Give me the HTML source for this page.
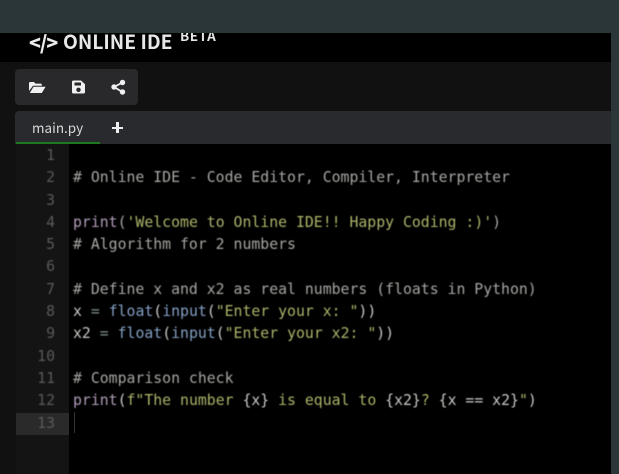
<!DOCTYPE html>
<html><head><meta charset="utf-8"><style>
html,body{margin:0;padding:0;background:#2b3639;width:619px;height:474px;overflow:hidden}
div{position:absolute}
#code,#nums{font-family:"DejaVu Sans Mono","Liberation Mono",monospace;font-size:14.82px;line-height:22.3px;white-space:pre;filter:blur(.45px)}
#code{left:73px;top:145px;color:#a6a6a2}
#nums{left:16px;top:145px;width:39px;text-align:right;color:#5a5a5a}
.k{color:#b09cb8}.f{color:#84a0c4}.s{color:#adb36a}.w{color:#c8c8c4}.o{color:#7f9090}
</style></head><body>
<div style="left:0;top:33px;width:611px;height:441px;background:#000;overflow:hidden">
  <div style="left:29px;top:-8.500px;color:#ececec;font:900 19.5px/34px 'Noto Sans CJK JP','DejaVu Sans',sans-serif;white-space:nowrap;filter:blur(.3px)"><span style="letter-spacing:-1px">&lt;/&gt;</span></div>
  <div style="left:63px;top:-9.500px;color:#e8e8e8;font:700 19.300px/34px 'Noto Sans CJK JP','DejaVu Sans',sans-serif;white-space:nowrap;filter:blur(.3px)">ONLINE IDE</div>
  <div style="left:180px;top:-7px;color:#e4e4e4;font:700 13.500px/18px 'Noto Sans CJK JP','Liberation Sans',sans-serif;letter-spacing:.6px;white-space:nowrap">BETA</div>
</div>
<div style="left:0;top:62px;width:611px;height:412px;background:#111"></div>
<div style="left:15px;top:69px;width:123px;height:36px;background:#29292c;border-radius:4px"></div>
<svg style="position:absolute;left:28px;top:79px" width="100" height="16" viewBox="0 0 100 16">
  <path fill="#f0f0f0" d="M1 4.200Q1 3 2.200 3H6l1.600 1.600h5.200q1 0 1 1V6.800H5L1 12Z"/>
  <path fill="#f0f0f0" d="M5.500 7.800H17.600L13.800 14H1.800Z"/>
  <path fill="#f0f0f0" fill-rule="evenodd" d="M45.500 1.500H53L57 5.200V13q0 1.500-1.500 1.500H45.500q-1.500 0-1.500-1.500V3q0-1.500 1.500-1.500ZM46.500 3.500V6.500H53V3.500ZM50.500 8.600a2.200 2.200 0 1 0 .01 0Z"/>
  <circle cx="94.500" cy="3.500" r="2.700" fill="#f0f0f0"/><circle cx="86" cy="8" r="2.700" fill="#f0f0f0"/><circle cx="94.500" cy="13" r="2.700" fill="#f0f0f0"/>
  <path stroke="#f0f0f0" stroke-width="1.800" fill="none" d="M94.500 3.500L86 8L94.500 13"/>
</svg>
<div style="left:15px;top:111px;width:596px;height:33px;background:#292a2d;border-radius:4px 0 0 0"></div>
<div style="left:32px;top:116px;color:#d8d8d8;font:13.500px/22px 'Noto Sans CJK JP','DejaVu Sans',sans-serif;white-space:nowrap;filter:blur(.25px)">main.py</div>
<div style="left:112px;top:126.500px;width:11px;height:2.400px;background:#ededed"></div>
<div style="left:116.300px;top:122px;width:2.400px;height:11px;background:#ededed"></div>
<div style="left:16px;top:142px;width:84px;height:2px;background:#1f7a1f"></div>
<div style="left:16px;top:144px;width:53px;height:330px;background:#141414"></div>
<div style="left:69px;top:144px;width:542px;height:330px;background:#000"></div>
<div style="left:16px;top:412.500px;width:53px;height:22px;background:#2a2a2a"></div>
<div style="left:73.500px;top:412px;width:1.500px;height:21px;background:#333"></div>
<div id="nums">1
2
3
4
5
6
7
8
9
10
11
12
13</div>
<div id="code">
# Online IDE - Code Editor, Compiler, Interpreter

<span class="k">print</span>(<span class="s">'Welcome to Online IDE!! Happy Coding :)'</span>)
# Algorithm for 2 numbers

# Define x and x2 as real numbers (floats in Python)
<span class="w">x</span> <span class="o">=</span> <span class="f">float</span><span class="w">(</span><span class="f">input</span><span class="w">(</span><span class="s">"Enter your x: "</span><span class="w">))</span>
<span class="w">x2</span> <span class="o">=</span> <span class="f">float</span><span class="w">(</span><span class="f">input</span><span class="w">(</span><span class="s">"Enter your x2: "</span><span class="w">))</span>

# Comparison check
<span class="k">print</span><span class="w">(</span><span class="s">f"The number </span><span class="w">{x}</span><span class="s"> is equal to </span><span class="w">{x2}</span><span class="s">? </span><span class="w">{x == x2}</span><span class="s">"</span><span class="w">)</span></div>
</body></html>
